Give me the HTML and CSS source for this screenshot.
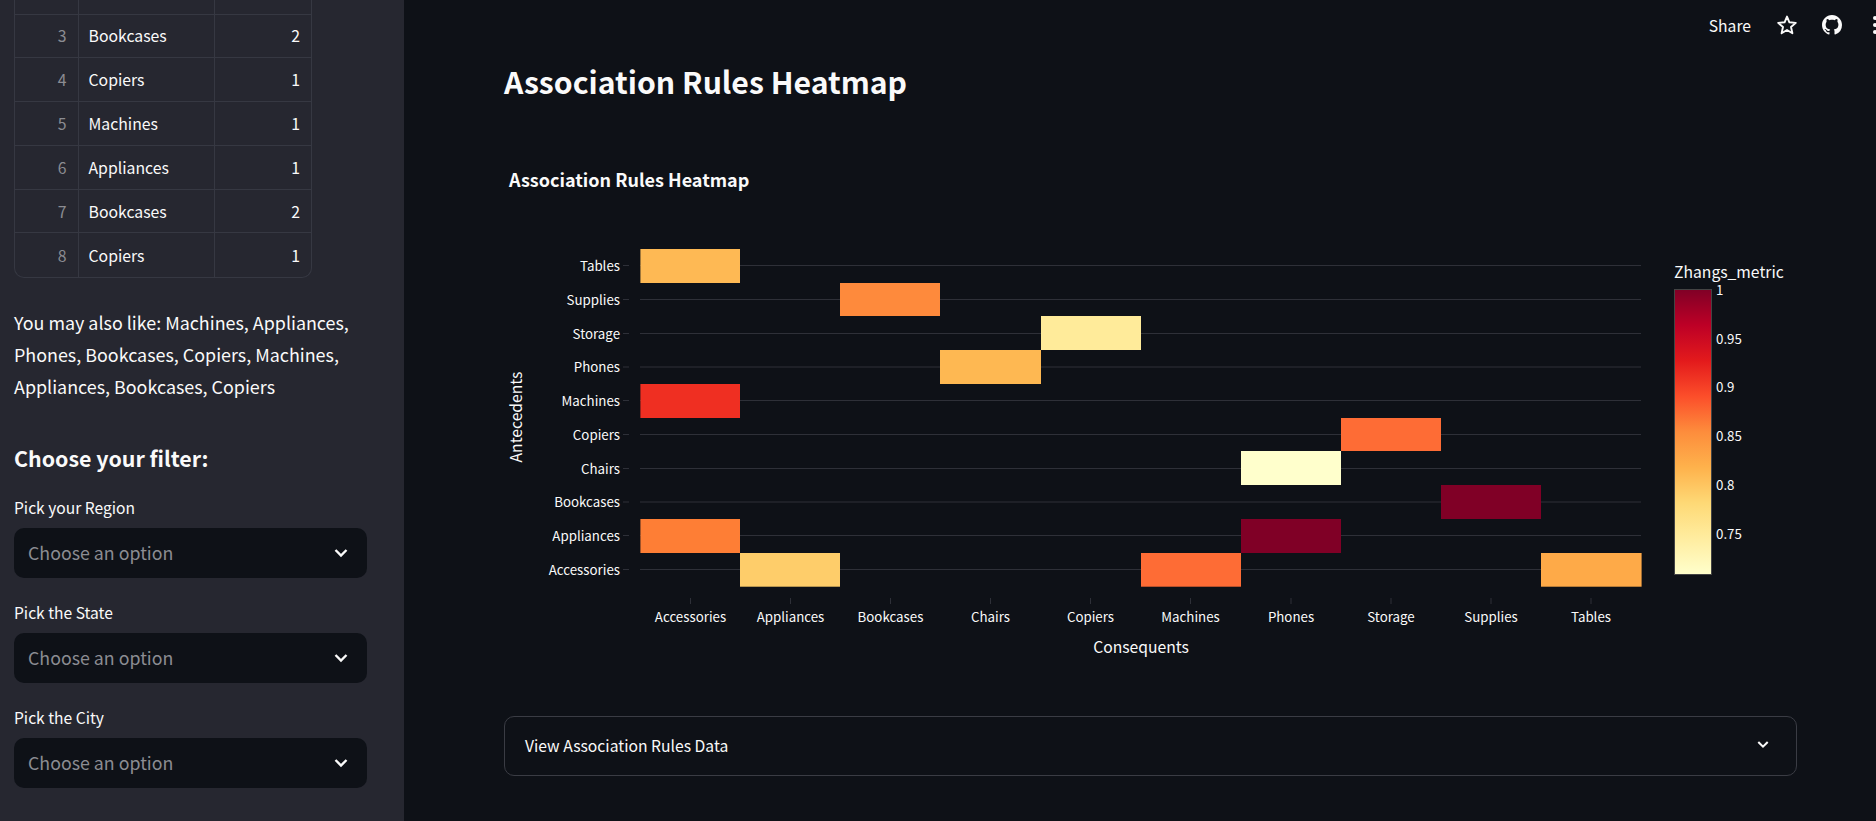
FILE: index.html
```html
<!DOCTYPE html>
<html lang="en">
<head>
  <meta charset="UTF-8" />
  <title>Association Rules Heatmap</title>
  <link rel="stylesheet" href="styles.css">
</head>
<body>
  <aside class="sidebar">
    <div class="table-wrap">
      <table class="rec-table">
        <tr class="cut-row"><td class="idx"></td><td></td><td></td></tr>
        <tr><td class="idx">3</td><td>Bookcases</td><td class="num">2</td></tr>
        <tr><td class="idx">4</td><td>Copiers</td><td class="num">1</td></tr>
        <tr><td class="idx">5</td><td>Machines</td><td class="num">1</td></tr>
        <tr><td class="idx">6</td><td>Appliances</td><td class="num">1</td></tr>
        <tr><td class="idx">7</td><td>Bookcases</td><td class="num">2</td></tr>
        <tr><td class="idx">8</td><td>Copiers</td><td class="num">1</td></tr>
      </table>
    </div>

    <p class="also-like">You may also like: Machines, Appliances, Phones, Bookcases, Copiers, Machines, Appliances, Bookcases, Copiers</p>

    <h3 class="filter-title">Choose your filter:</h3>

    <div class="filter">
      <label class="filter-label">Pick your Region</label>
      <div class="select">
        <span>Choose an option</span>
        <svg class="chev" viewBox="0 0 14 10"><polyline points="1.5,2 7,7.5 12.5,2" /></svg>
      </div>
    </div>
    <div class="filter">
      <label class="filter-label">Pick the State</label>
      <div class="select">
        <span>Choose an option</span>
        <svg class="chev" viewBox="0 0 14 10"><polyline points="1.5,2 7,7.5 12.5,2" /></svg>
      </div>
    </div>
    <div class="filter">
      <label class="filter-label">Pick the City</label>
      <div class="select">
        <span>Choose an option</span>
        <svg class="chev" viewBox="0 0 14 10"><polyline points="1.5,2 7,7.5 12.5,2" /></svg>
      </div>
    </div>
  </aside>

  <main class="main">
    <header class="topbar">
      <span class="share">Share</span>
      <svg class="star" viewBox="0 0 20 20"><polygon points="10,1.6 12.4,7.3 18.8,7.9 14,12 15.4,18.2 10,15 4.6,18.2 6,12 1.2,7.9 7.6,7.3" /></svg>
      <svg class="github" viewBox="0 0 16 16"><path d="M8 0C3.58 0 0 3.58 0 8c0 3.54 2.29 6.53 5.47 7.59.4.07.55-.17.55-.38 0-.19-.01-.82-.01-1.49-2.01.37-2.53-.49-2.69-.94-.09-.23-.48-.94-.82-1.13-.28-.15-.68-.52-.01-.53.63-.01 1.08.58 1.23.82.72 1.21 1.87.87 2.33.66.07-.52.28-.87.51-1.07-1.78-.2-3.64-.89-3.64-3.95 0-.87.31-1.59.82-2.15-.08-.2-.36-1.02.08-2.12 0 0 .67-.21 2.2.82.64-.18 1.32-.27 2-.27.68 0 1.36.09 2 .27 1.53-1.04 2.2-.82 2.2-.82.44 1.1.16 1.92.08 2.12.51.56.82 1.27.82 2.15 0 3.07-1.87 3.75-3.65 3.95.29.25.54.73.54 1.48 0 1.07-.01 1.93-.01 2.2 0 .21.15.46.55.38A8.013 8.013 0 0016 8c0-4.42-3.58-8-8-8z" /></svg>
      <svg class="kebab" viewBox="0 0 3 20"><circle cx="2" cy="3" r="2" /><circle cx="2" cy="10" r="2" /><circle cx="2" cy="17" r="2" /></svg>
    </header>

    <h1 class="page-title">Association Rules Heatmap</h1>

    <svg class="chart" viewBox="504 140 1296 560">
      <defs>
        <linearGradient id="ylorrd" x1="0" y1="1" x2="0" y2="0">
          <stop offset="0" stop-color="#ffffcc" />
          <stop offset="0.125" stop-color="#ffeda0" />
          <stop offset="0.25" stop-color="#fed976" />
          <stop offset="0.375" stop-color="#feb24c" />
          <stop offset="0.5" stop-color="#fd8d3c" />
          <stop offset="0.625" stop-color="#fc4e2a" />
          <stop offset="0.75" stop-color="#e31a1c" />
          <stop offset="0.875" stop-color="#bd0026" />
          <stop offset="1" stop-color="#800026" />
        </linearGradient>
      </defs>

      <text class="chart-title" x="509" y="187">Association Rules Heatmap</text>

      <!-- grid -->
      <g class="grid">
        <line x1="640" x2="1641" y1="265.5" y2="265.5" />
        <line x1="640" x2="1641" y1="299.5" y2="299.5" />
        <line x1="640" x2="1641" y1="333.5" y2="333.5" />
        <line x1="640" x2="1641" y1="367" y2="367" />
        <line x1="640" x2="1641" y1="400.5" y2="400.5" />
        <line x1="640" x2="1641" y1="434.5" y2="434.5" />
        <line x1="640" x2="1641" y1="468.5" y2="468.5" />
        <line x1="640" x2="1641" y1="502" y2="502" />
        <line x1="640" x2="1641" y1="535.5" y2="535.5" />
        <line x1="640" x2="1641" y1="569.5" y2="569.5" />
      </g>

      <!-- ticks -->
      <g class="grid">
        <line x1="623" x2="629" y1="265.5" y2="265.5" />
        <line x1="623" x2="629" y1="299.5" y2="299.5" />
        <line x1="623" x2="629" y1="333.5" y2="333.5" />
        <line x1="623" x2="629" y1="367" y2="367" />
        <line x1="623" x2="629" y1="400.5" y2="400.5" />
        <line x1="623" x2="629" y1="434.5" y2="434.5" />
        <line x1="623" x2="629" y1="468.5" y2="468.5" />
        <line x1="623" x2="629" y1="502" y2="502" />
        <line x1="623" x2="629" y1="535.5" y2="535.5" />
        <line x1="623" x2="629" y1="569.5" y2="569.5" />
        <line x1="690.5" x2="690.5" y1="598" y2="604" />
        <line x1="790.5" x2="790.5" y1="598" y2="604" />
        <line x1="890.5" x2="890.5" y1="598" y2="604" />
        <line x1="990.5" x2="990.5" y1="598" y2="604" />
        <line x1="1090.5" x2="1090.5" y1="598" y2="604" />
        <line x1="1190.5" x2="1190.5" y1="598" y2="604" />
        <line x1="1291" x2="1291" y1="598" y2="604" />
        <line x1="1391" x2="1391" y1="598" y2="604" />
        <line x1="1491" x2="1491" y1="598" y2="604" />
        <line x1="1591" x2="1591" y1="598" y2="604" />
      </g>

      <!-- cells -->
      <rect x="640.4" y="249" width="99.6" height="34" fill="#feb954" />
      <rect x="840" y="283" width="100" height="33" fill="#fe8a3c" />
      <rect x="1041" y="316" width="100" height="34" fill="#ffeb9a" />
      <rect x="940" y="350" width="101" height="34" fill="#feb852" />
      <rect x="640.4" y="384" width="99.6" height="34" fill="#ef2f22" />
      <rect x="1341" y="418" width="100" height="33" fill="#fe6c35" />
      <rect x="1241" y="451" width="100" height="34" fill="#ffffcc" />
      <rect x="1441" y="485" width="100" height="34" fill="#800026" />
      <rect x="640.4" y="519" width="99.6" height="34" fill="#fe7e35" />
      <rect x="1241" y="519" width="100" height="34" fill="#800026" />
      <rect x="740" y="553" width="100" height="33.7" fill="#fecd6a" />
      <rect x="1141" y="553" width="100" height="33.7" fill="#fe6c35" />
      <rect x="1541" y="553" width="100.6" height="33.7" fill="#feaa48" />

      <!-- y labels -->
      <g class="tick-label y-labels">
        <text x="620" y="271">Tables</text>
        <text x="620" y="305">Supplies</text>
        <text x="620" y="339">Storage</text>
        <text x="620" y="372">Phones</text>
        <text x="620" y="406">Machines</text>
        <text x="620" y="440">Copiers</text>
        <text x="620" y="474">Chairs</text>
        <text x="620" y="507">Bookcases</text>
        <text x="620" y="541">Appliances</text>
        <text x="620" y="575">Accessories</text>
      </g>

      <!-- x labels -->
      <g class="tick-label x-labels">
        <text x="690.5" y="622">Accessories</text>
        <text x="790.5" y="622">Appliances</text>
        <text x="890.5" y="622">Bookcases</text>
        <text x="990.5" y="622">Chairs</text>
        <text x="1090.5" y="622">Copiers</text>
        <text x="1190.5" y="622">Machines</text>
        <text x="1291" y="622">Phones</text>
        <text x="1391" y="622">Storage</text>
        <text x="1491" y="622">Supplies</text>
        <text x="1591" y="622">Tables</text>
      </g>

      <text class="axis-title x-labels" x="1141" y="653">Consequents</text>
      <text class="axis-title x-labels" x="522" y="417" transform="rotate(-90 522 417)">Antecedents</text>

      <!-- colorbar -->
      <text class="axis-title" x="1674" y="278">Zhangs_metric</text>
      <rect class="colorbar" x="1674.5" y="289.5" width="37" height="285" fill="url(#ylorrd)" />
      <g class="tick-label">
        <text x="1716" y="295">1</text>
        <text x="1716" y="344">0.95</text>
        <text x="1716" y="392">0.9</text>
        <text x="1716" y="441">0.85</text>
        <text x="1716" y="490">0.8</text>
        <text x="1716" y="539">0.75</text>
      </g>
    </svg>

    <div class="expander">
      <span>View Association Rules Data</span>
      <svg class="chev chev-small" viewBox="0 0 14 10"><polyline points="1.5,2 7,7.5 12.5,2" /></svg>
    </div>
  </main>
</body>
</html>
```

FILE: styles.css
```css
* {
  box-sizing: border-box;
}
html, body {
  height: 100%;
}
body {
  margin: 0;
  display: flex;
  overflow: hidden;
  background: #0e1117;
  color: #fafafa;
  font-family: "Noto Sans CJK SC", "Noto Sans", sans-serif;
}

/* sidebar */
.sidebar {
  width: 404px;
  flex: none;
  height: 100%;
  padding: 0 37px 0 14px;
  background: #262730;
  overflow: hidden;
}
.table-wrap {
  width: 298px;
  border: 1px solid #363842;
  border-top: 0;
  border-radius: 0 0 10px 10px;
  overflow: hidden;
}
.rec-table {
  width: 100%;
  border-collapse: collapse;
  table-layout: fixed;
  font-size: 15.8px;
}
.rec-table tr {
  height: 43.8px;
}
.rec-table tr.cut-row {
  height: 14px;
}
.rec-table td {
  padding: 1px 11px 0 10px;
  border: 1px solid #363842;
  line-height: 24px;
}
.rec-table .cut-row td {
  padding-top: 0;
  border-top: 0;
  line-height: 1px;
}
.rec-table tr:last-child td {
  border-bottom: 0;
}
.rec-table td:first-child {
  border-left: 0;
  width: 63px;
}
.rec-table td:nth-child(2) {
  width: 136px;
}
.rec-table td:last-child {
  border-right: 0;
}
.idx {
  text-align: right;
  color: #8b8c92;
}
.num {
  text-align: right;
}
.also-like {
  margin: 28px 0 0;
  font-size: 17.9px;
  line-height: 32px;
}
.filter-title {
  margin: 34px 0 0;
  font-size: 21.4px;
  font-weight: 600;
  line-height: 44px;
}
.filter {
  margin-bottom: 23px;
}
.filter-title + .filter {
  margin-top: 16px;
}
.filter-label {
  display: block;
  margin-bottom: 8px;
  padding-bottom: 2px;
  font-size: 15.6px;
  line-height: 22px;
}
.select {
  display: flex;
  align-items: center;
  justify-content: space-between;
  height: 50px;
  padding: 0 19px 0 14px;
  background: #0e1117;
  border-radius: 10px;
  font-size: 17.8px;
  color: #8b8c92;
}
.select span,
.expander span {
  margin-top: -2px;
}
.chev {
  width: 14px;
  height: 10px;
  fill: none;
  stroke: #fafafa;
  stroke-width: 2.4;
}

/* main */
.main {
  flex: 1;
  min-width: 0;
  padding-left: 100px;
  padding-right: 79px;
}
.topbar {
  display: flex;
  align-items: center;
  justify-content: flex-end;
  height: 50px;
  margin-right: -79px;
}
.share {
  font-size: 15.7px;
  margin-right: 26px;
}
.star {
  width: 20px;
  height: 20px;
  margin-right: 25px;
  fill: none;
  stroke: #fafafa;
  stroke-width: 1.9;
  stroke-linejoin: round;
}
.github {
  width: 20px;
  height: 20px;
  margin-right: 31px;
  fill: #fafafa;
}
.kebab {
  width: 3px;
  height: 20px;
  fill: #fafafa;
}
.page-title {
  margin: 0;
  font-size: 30.2px;
  font-weight: 600;
  line-height: 62px;
}
.chart {
  display: block;
  width: 1296px;
  height: 560px;
  margin-top: 28px;
}
.chart-title {
  font-size: 18px;
  font-weight: 700;
  fill: #fafafa;
}
.grid line {
  stroke: #2e3038;
  stroke-width: 1;
}
.tick-label {
  font-size: 13.3px;
  fill: #fafafa;
}
.y-labels {
  text-anchor: end;
}
.x-labels {
  text-anchor: middle;
}
.axis-title {
  font-size: 15.7px;
  fill: #fafafa;
}
.colorbar {
  stroke: #444444;
  stroke-width: 1;
}
.expander {
  display: flex;
  align-items: center;
  justify-content: space-between;
  height: 60px;
  margin-top: 16px;
  padding: 0 27px 0 20px;
  border: 1px solid #3a3c44;
  border-radius: 10px;
  font-size: 15.7px;
}
.chev-small {
  width: 12px;
  height: 9px;
  margin-top: -4px;
}
```
